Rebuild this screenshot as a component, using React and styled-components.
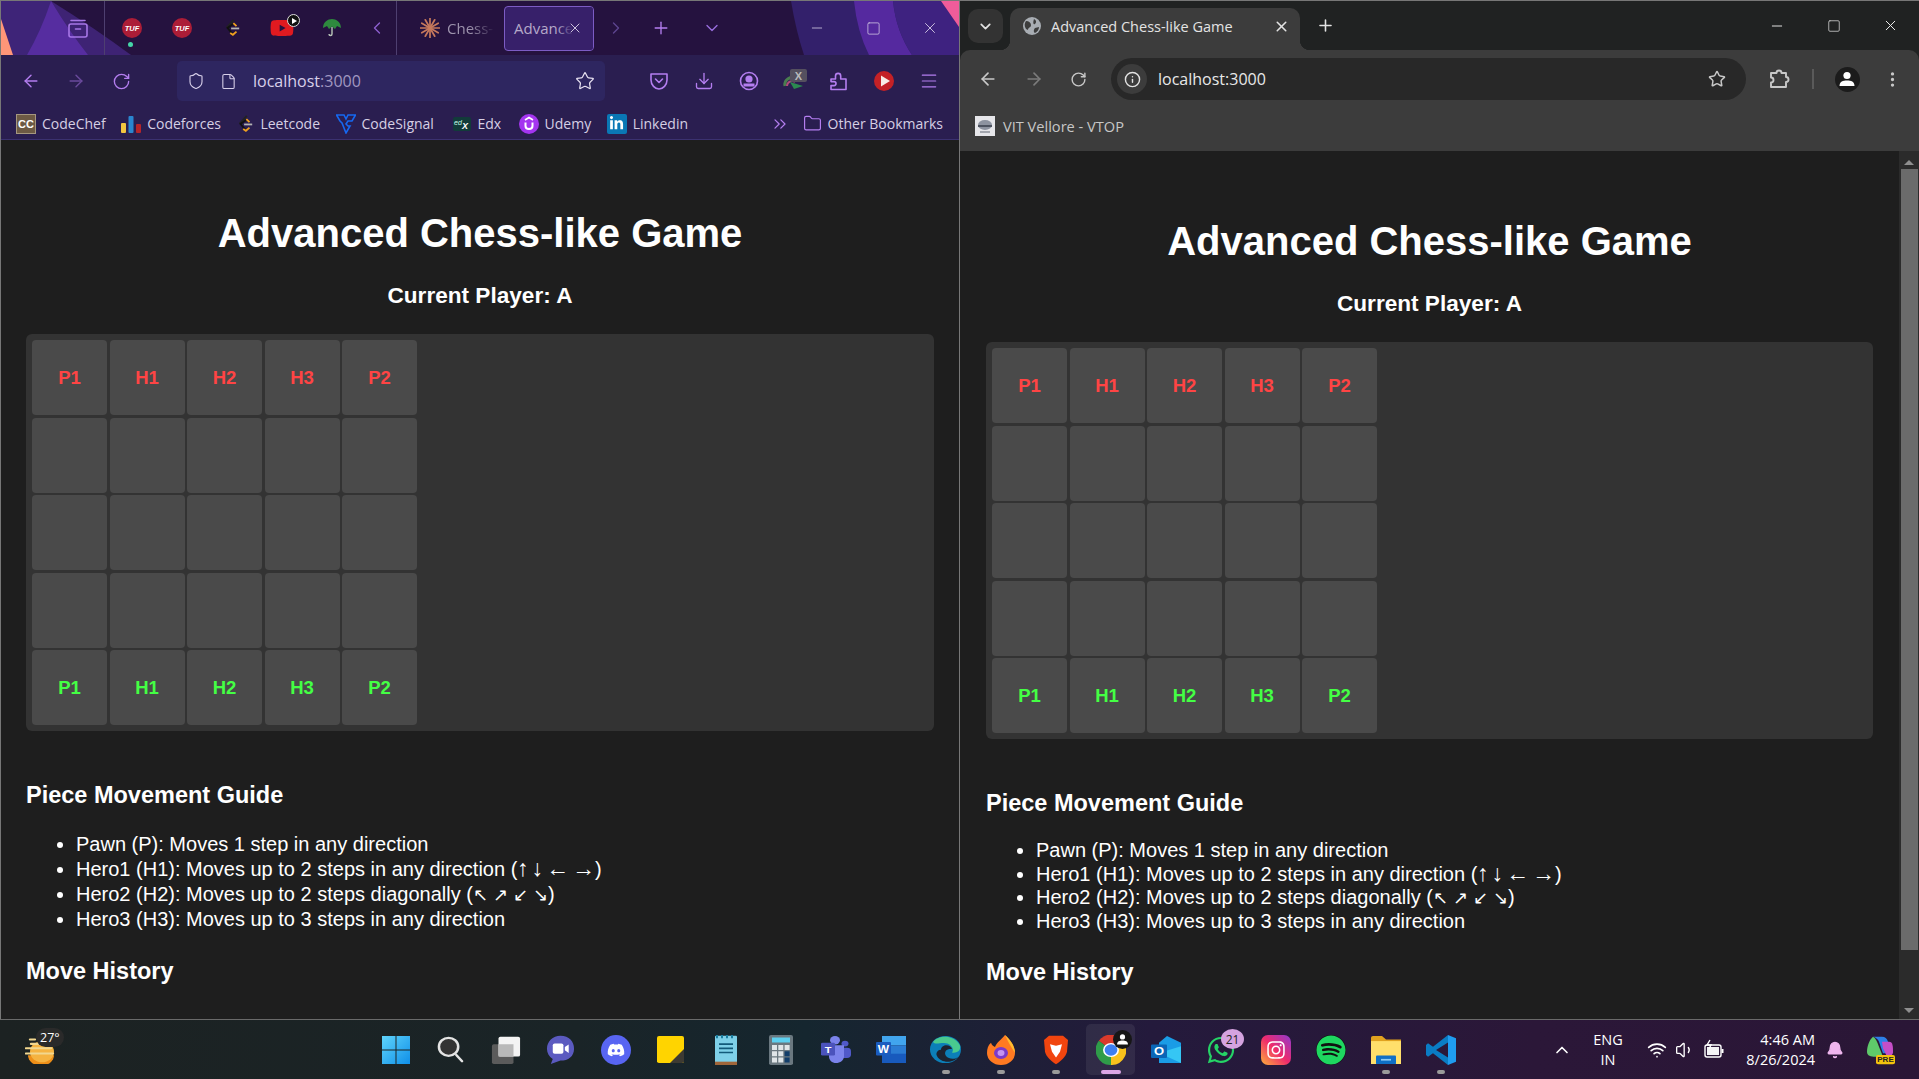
import styled, { createGlobalStyle } from "styled-components";
import {
  ArrowLeft, ArrowRight, RotateCw, Shield, File, Star, Download, Menu, Folder,
  ChevronLeft, ChevronRight, ChevronDown, ChevronUp, ChevronsRight, Plus, X, Minus, Square,
  Info, EllipsisVertical, Wifi, Volume1, Bell,
} from "lucide-react";
import { FaDiscord, FaSpotify, FaWhatsapp, FaInstagram, FaLinkedinIn, FaYoutube } from "react-icons/fa";

const GlobalStyle = createGlobalStyle`
  html, body { margin: 0; padding: 0; height: 100%; overflow: hidden; background: #1e1e1e; }
  * { box-sizing: border-box; }
`;

const Desktop = styled.div`
  width: 1919px;
  height: 1079px;
  display: flex;
  flex-direction: column;
  overflow: hidden;
`;

const Windows = styled.div`
  display: flex;
  height: 1020px;
  border-top: 1px solid #777;
  border-bottom: 1px solid #6a6a6a;
`;

/* ---------- game page ---------- */

const Page = styled.main`
  flex: 1;
  min-width: 0;
  min-height: 0;
  overflow: hidden;
  background: #1e1e1e;
  color: #fff;
  font-family: "Liberation Sans", Arial, sans-serif;
  padding: ${(p) => p.$top}px ${(p) => p.$right}px 0 ${(p) => p.$left}px;
`;

const Title = styled.h1`
  margin: 0;
  font-size: 40px;
  line-height: 46px;
  font-weight: 700;
  text-align: center;
`;

const CurrentPlayer = styled.h2`
  margin: 27px 0 26px;
  font-size: 22.6px;
  line-height: 25px;
  font-weight: 700;
  text-align: center;
`;

const Board = styled.div`
  display: grid;
  grid-template-columns: repeat(5, 75px);
  grid-auto-rows: 75px;
  gap: 2.5px;
  padding: 6px;
  background: #333;
  border-radius: 6px;
`;

const Cell = styled.div`
  display: flex;
  align-items: center;
  justify-content: center;
  background: #4a4a4a;
  border-radius: 4px;
  font-size: 18.5px;
  font-weight: 700;
  color: ${(p) => (p.$side === "A" ? "#44ff44" : "#ff4444")};
`;

const SectionTitle = styled.h3`
  margin: ${(p) => p.$gap}px 0 0;
  font-size: 23.5px;
  line-height: 25px;
  font-weight: 700;
`;

const Guide = styled.ul`
  margin: ${(p) => p.$gap}px 0 0;
  padding-left: 50px;
  font-size: 20px;
  line-height: ${(p) => p.$line}px;
`;

const StraightArrows = styled.span`
  font-size: 23px;
  line-height: 1px;
  word-spacing: -3.5px;
`;

const DiagonalArrows = styled.span`
  font-size: 18px;
  line-height: 1px;
`;

const boardRows = [
  ["P1", "H1", "H2", "H3", "P2"].map((t) => ({ t, side: "B" })),
  ...Array(15).fill({ t: "", side: "" }),
  ["P1", "H1", "H2", "H3", "P2"].map((t) => ({ t, side: "A" })),
].flat();

const GamePage = ({ top, left, right, line, guideGap, historyGap }) => (
  <Page $top={top} $left={left} $right={right}>
    <Title>Advanced Chess-like Game</Title>
    <CurrentPlayer>Current Player: A</CurrentPlayer>
    <Board>
      {boardRows.map((c, i) => (
        <Cell key={i} $side={c.side}>{c.t}</Cell>
      ))}
    </Board>
    <SectionTitle $gap={52}>Piece Movement Guide</SectionTitle>
    <Guide $line={line} $gap={guideGap}>
      <li>Pawn (P): Moves 1 step in any direction</li>
      <li>Hero1 (H1): Moves up to 2 steps in any direction (<StraightArrows>↑ ↓ ← →</StraightArrows>)</li>
      <li>Hero2 (H2): Moves up to 2 steps diagonally (<DiagonalArrows>↖ ↗ ↙ ↘</DiagonalArrows>)</li>
      <li>Hero3 (H3): Moves up to 3 steps in any direction</li>
    </Guide>
    <SectionTitle $gap={historyGap}>Move History</SectionTitle>
  </Page>
);

/* ---------- firefox ---------- */

const FoxWindow = styled.section`
  width: 960px;
  flex: none;
  display: flex;
  flex-direction: column;
  border-left: 1px solid #777;
  border-right: 1px solid #777;
  font-family: "Open Sans", "Noto Sans", sans-serif;
`;

const FoxTabs = styled.div`
  position: relative;
  height: 54px;
  flex: none;
  display: flex;
  align-items: center;
  background: #25123f;
`;

const ThemeArt = styled.svg`
  position: absolute;
  inset: 0;
  width: 100%;
  height: 100%;
`;

const Slot = styled.div`
  position: relative;
  width: ${(p) => p.$w}px;
  height: 100%;
  flex: none;
  display: flex;
  align-items: center;
  justify-content: center;
  color: ${(p) => p.$color || "#b47ef0"};
`;

const StripDivider = styled.div`
  width: 1px;
  height: 100%;
  flex: none;
  position: relative;
  margin: ${(p) => p.$m || "0"};
  background: #4e3f70;
`;

const LoadDot = styled.span`
  position: absolute;
  left: 21px;
  top: 41px;
  width: 5px;
  height: 5px;
  border-radius: 50%;
  background: #45d6a8;
`;

const PlayBadge = styled.span`
  position: absolute;
  right: 7px;
  top: 13px;
  width: 13px;
  height: 13px;
  border-radius: 50%;
  background: #111;
  border: 1px solid #ddd;
  display: flex;
  align-items: center;
  justify-content: center;
  &::after {
    content: "";
    margin-left: 1px;
    border-left: 5px solid #fff;
    border-top: 3px solid transparent;
    border-bottom: 3px solid transparent;
  }
`;

const InactiveTab = styled.div`
  position: relative;
  width: 107px;
  height: 100%;
  flex: none;
  display: flex;
  align-items: center;
  gap: 7px;
  padding-left: 23px;
  font-size: 15px;
  color: #9d93ad;
  white-space: nowrap;
  mask-image: linear-gradient(to right, #000 68%, transparent 92%);
  svg { flex: none; }
`;

const ActiveTab = styled.div`
  position: relative;
  width: 90px;
  height: 45px;
  flex: none;
  display: flex;
  align-items: center;
  padding-left: 9px;
  overflow: hidden;
  background: #37206a;
  border: 1px solid #7c5cc4;
  border-radius: 4px;
  font-size: 15px;
  color: #b5a9c9;
  white-space: nowrap;
`;

const TabClose = styled.span`
  position: absolute;
  right: 0;
  top: 0;
  bottom: 0;
  width: 36px;
  display: flex;
  align-items: center;
  justify-content: center;
  color: #d8cfe6;
  background: linear-gradient(to right, transparent, #37206a 45%);
`;

const FoxToolbar = styled.div`
  height: 52px;
  flex: none;
  display: flex;
  align-items: center;
  padding-left: 7px;
  background: #2a1e50;
`;

const UrlBar = styled.div`
  width: 428px;
  height: 40px;
  flex: none;
  margin: 0 31px 0 32.5px;
  display: flex;
  align-items: center;
  padding: 0 10px 0 10px;
  background: #2e2660;
  border-radius: 5px;
  font-size: 16px;
  color: #d8d0ea;
`;

const UrlText = styled.span`
  margin-left: 16px;
  flex: 1;
`;

const Port = styled.span`
  color: #a198c0;
`;

const Bookmarks = styled.div`
  height: 33px;
  flex: none;
  display: flex;
  align-items: center;
  gap: 15.5px;
  padding: 1px 16px 0 15px;
  background: #2a1e50;
  border-bottom: 1px solid #3b3170;
`;

const Bookmark = styled.div`
  display: flex;
  align-items: center;
  gap: 6px;
  font-size: 14px;
  line-height: 20px;
  color: #d6cfe4;
  white-space: nowrap;
  margin-left: ${(p) => (p.$push ? "auto" : `${p.$shift || 0}px`)};
  margin-right: ${(p) => (p.$push ? "-3px" : "0")};
`;

const CcIcon = styled.span`
  width: 20px;
  height: 20px;
  display: flex;
  align-items: center;
  justify-content: center;
  background: #6d5a44;
  border: 1px solid #a5977f;
  color: #fff;
  font: 700 11px "Liberation Sans", sans-serif;
`;

const LinkedinIcon = styled.span`
  width: 20px;
  height: 20px;
  display: flex;
  align-items: center;
  justify-content: center;
  background: #0a77b5;
  border-radius: 2px;
  color: #fff;
`;

const TufIcon = () => (
  <svg width="20" height="20" viewBox="0 0 20 20">
    <circle cx="10" cy="10" r="10" fill="#ac1d37" />
    <text x="10" y="12.5" textAnchor="middle" fontFamily="Liberation Sans" fontStyle="italic" fontWeight="700" fontSize="7.5" fill="#fff">TUF</text>
  </svg>
);

const LeetIcon = ({ size = 18 }) => (
  <svg width={size} height={size} viewBox="0 0 20 20" fill="none" strokeWidth="2">
    <path d="M12 1 L4 9.5" stroke="#222" />
    <path d="M12 5 L5 10 L11 17" stroke="#111" />
    <path d="M11.5 4.5 L15 8 M15 14 L11 17.5 L8 15.5" stroke="#f0a020" />
    <path d="M9 10.5 H18" stroke="#b3b3b3" />
  </svg>
);

const ArchiveIcon = () => (
  <svg width="22" height="22" viewBox="0 0 22 22" fill="none" stroke="#a777e6" strokeWidth="1.6">
    <rect x="2" y="7" width="18" height="13" rx="2" />
    <path d="M4 3.5 H18 M8.5 12 H13.5" strokeLinecap="round" />
  </svg>
);

const UmbrellaIcon = () => (
  <svg width="20" height="20" viewBox="0 0 20 20">
    <path d="M1 10 C1 4 6 1 10 1 C14 1 19 4 19 10 L15 8 L13 11 L10 8.5 L7 11 L5 8 Z" fill="#2e8a3e" />
    <path d="M10 9 V16 C10 18 7 18 7 16" fill="none" stroke="#b9c7b9" strokeWidth="1.4" />
  </svg>
);

const StarBurst = () => (
  <svg width="20" height="20" viewBox="0 0 20 20" stroke="#c7795c" strokeWidth="1.7" strokeLinecap="round">
    {Array.from({ length: 12 }).map((_, i) => (
      <line key={i} x1="10" y1="10" x2="10" y2="0.5" transform={`rotate(${i * 30} 10 10)`} />
    ))}
  </svg>
);

const PocketIcon = () => (
  <svg width="20" height="20" viewBox="0 0 20 20" fill="none" stroke="#b47ef0" strokeWidth="1.6" strokeLinecap="round" strokeLinejoin="round">
    <path d="M2 3 H18 V9 C18 14 14 18 10 18 C6 18 2 14 2 9 Z" />
    <path d="M6.5 8 L10 11.5 L13.5 8" />
  </svg>
);

const AccountIcon = () => (
  <svg width="20" height="20" viewBox="0 0 20 20" fill="none" stroke="#b47ef0" strokeWidth="1.6">
    <circle cx="10" cy="10" r="8.5" />
    <circle cx="10" cy="8" r="2.8" fill="#b47ef0" />
    <path d="M4.5 14 H15.5" strokeWidth="3" />
  </svg>
);

const ExtensionIcon = () => (
  <svg width="26" height="26" viewBox="0 0 26 26">
    <path d="M4 18 A7 7 0 0 1 15 11" fill="none" stroke="#4a7d4f" strokeWidth="3" />
    <path d="M6 18 A5 5 0 0 1 14 14" fill="none" stroke="#b24a7a" strokeWidth="2" />
    <path d="M9 14 L22 18 L13 21 Z" fill="#2c8a50" />
    <rect x="9" y="1" width="17" height="13" rx="2" fill="#55505f" />
    <text x="17.5" y="11.5" textAnchor="middle" fontFamily="Liberation Sans" fontWeight="700" fontSize="11" fill="#bbb">X</text>
  </svg>
);

const FoxPuzzle = () => (
  <svg width="20" height="20" viewBox="0 0 20 20" fill="none" stroke="#b47ef0" strokeWidth="1.6" strokeLinejoin="round">
    <path d="M2 8 H6.5 V5 A2.6 2.6 0 0 1 11.7 5 V8 H17 V18.5 H2 V14.6 H5 A2 2 0 0 0 5 10.6 H2 Z" />
  </svg>
);

const RedPlay = () => (
  <svg width="20" height="20" viewBox="0 0 20 20">
    <circle cx="10" cy="10" r="10" fill="#c42126" />
    <path d="M7 4.5 L16 10 L7 15.5 Z" fill="#f7ece6" />
  </svg>
);

const BarsIcon = () => (
  <svg width="20" height="20" viewBox="0 0 20 20">
    <rect x="0" y="9" width="5" height="10" rx="1" fill="#f3c63f" />
    <rect x="7.5" y="2" width="5" height="17" rx="1" fill="#2a86cf" />
    <rect x="15" y="10" width="5" height="9" rx="1" fill="#b5252a" />
  </svg>
);

const SignalIcon = () => (
  <svg width="20" height="20" viewBox="0 0 20 20" fill="none" stroke="#1668f0" strokeWidth="1.6">
    <path d="M0.5 1 H8 L10 5 L12 1 H19.5 L16 7 H12 L10 10 L12 12 H14 L10 19 L6 9 L4 7 Z" />
  </svg>
);

const EdxIcon = () => (
  <svg width="18" height="14" viewBox="0 0 18 14">
    <rect width="18" height="14" rx="2" fill="#123b3a" />
    <text x="1" y="8" fontFamily="Liberation Sans" fontStyle="italic" fontSize="7" fill="#cfe">ed</text>
    <text x="9" y="12" fontFamily="Liberation Sans" fontStyle="italic" fontWeight="700" fontSize="9" fill="#fff">X</text>
  </svg>
);

const UdemyIcon = () => (
  <svg width="20" height="20" viewBox="0 0 20 20">
    <circle cx="10" cy="10" r="10" fill="#a435f0" />
    <path d="M6.5 8.5 V12 C6.5 16 13.5 16 13.5 12 V8.5" fill="none" stroke="#fff" strokeWidth="2" />
    <path d="M6 6 L10 3.5 L14 6" fill="none" stroke="#fff" strokeWidth="1.6" />
  </svg>
);

const FirefoxWindow = () => (
  <FoxWindow>
    <FoxTabs>
      <ThemeArt viewBox="0 0 958 54" preserveAspectRatio="none">
        <path d="M0 0 H50 Q95 28 130 54 H0 Z" fill="#3e2374" />
        <path d="M50 0 Q68 30 87 54 H10 L0 20 V0 Z" fill="#5a2fa8" opacity="0.85" />
        <path d="M0 0 H50 Q40 30 26 54 H8 L0 20 Z" fill="#3e2478" />
        <path d="M0 18 L12 54 H0 Z" fill="#ff9678" />
        <path d="M790 0 H958 V54 H803 Q795 30 790 0 Z" fill="#33206b" />
        <path d="M853 0 H892 Q895 30 911 54 H868 Q856 30 853 0 Z" fill="#55299f" />
        <path d="M892 0 H940 L958 26 V54 H911 Q895 30 892 0 Z" fill="#3e2280" />
        <path d="M940 0 H958 V26 Z" fill="#ef5c9a" />
      </ThemeArt>
      <Slot $w={50} />
      <Slot $w={53}><ArchiveIcon /></Slot>
      <StripDivider $m="0 2px 0 0" />
      <Slot $w={50}><TufIcon /><LoadDot /></Slot>
      <Slot $w={50}><TufIcon /></Slot>
      <Slot $w={50}><LeetIcon /></Slot>
      <Slot $w={50} $color="#e01a20"><FaYoutube size={24} /><PlayBadge /></Slot>
      <Slot $w={50}><UmbrellaIcon /></Slot>
      <Slot $w={39} $color="#8d5fd0"><ChevronLeft size={20} strokeWidth={1.6} /></Slot>
      <StripDivider />
      <InactiveTab><StarBurst />Chess-</InactiveTab>
      <ActiveTab>
        Advanced
        <TabClose><X size={16} strokeWidth={1.4} /></TabClose>
      </ActiveTab>
      <Slot $w={44} $color="#5d4590"><ChevronRight size={20} strokeWidth={1.6} /></Slot>
      <Slot $w={46}><Plus size={20} strokeWidth={1.6} /></Slot>
      <Slot $w={56} $color="#9a6fe0"><ChevronDown size={20} strokeWidth={1.6} /></Slot>
      <Slot $w={48} />
      <Slot $w={57} $color="#d6cde6"><Minus size={16} strokeWidth={1.2} /></Slot>
      <Slot $w={57} $color="#d6cde6"><Square size={15} strokeWidth={1.2} /></Slot>
      <Slot $w={56} $color="#d6cde6"><X size={18} strokeWidth={1.2} /></Slot>
    </FoxTabs>
    <FoxToolbar>
      <Slot $w={45.5}><ArrowLeft size={20} strokeWidth={1.7} /></Slot>
      <Slot $w={45.5} $color="#6a4a9c"><ArrowRight size={20} strokeWidth={1.7} /></Slot>
      <Slot $w={45.5}><RotateCw size={19} strokeWidth={1.7} /></Slot>
      <UrlBar>
        <Shield size={18} strokeWidth={1.5} color="#d8d0ea" />
        <File size={17} strokeWidth={1.5} color="#d8d0ea" style={{ marginLeft: 15 }} />
        <UrlText>localhost<Port>:3000</Port></UrlText>
        <Star size={20} strokeWidth={1.5} color="#e6e0f0" />
      </UrlBar>
      <Slot $w={45}><PocketIcon /></Slot>
      <Slot $w={45}><Download size={20} strokeWidth={1.6} /></Slot>
      <Slot $w={45}><AccountIcon /></Slot>
      <Slot $w={45}><ExtensionIcon /></Slot>
      <Slot $w={45}><FoxPuzzle /></Slot>
      <Slot $w={45}><RedPlay /></Slot>
      <Slot $w={45}><Menu size={20} strokeWidth={1.4} /></Slot>
    </FoxToolbar>
    <Bookmarks>
      <Bookmark><CcIcon>CC</CcIcon>CodeChef</Bookmark>
      <Bookmark><BarsIcon />Codeforces</Bookmark>
      <Bookmark><LeetIcon />Leetcode</Bookmark>
      <Bookmark><SignalIcon />CodeSignal</Bookmark>
      <Bookmark $shift={4}><EdxIcon />Edx</Bookmark>
      <Bookmark $shift={2}><UdemyIcon />Udemy</Bookmark>
      <Bookmark><LinkedinIcon><FaLinkedinIn size={15} /></LinkedinIcon>Linkedin</Bookmark>
      <Bookmark $push><ChevronsRight size={20} strokeWidth={1.5} color="#b47ef0" /></Bookmark>
      <Bookmark><Folder size={19} strokeWidth={1.5} color="#b47ef0" />Other Bookmarks</Bookmark>
    </Bookmarks>
    <GamePage top={70} left={25} right={25} line={25.3} guideGap={23.5} historyGap={26} />
  </FoxWindow>
);

/* ---------- chrome ---------- */

const ChromeFrame = styled.section`
  flex: 1;
  min-width: 0;
  display: flex;
  flex-direction: column;
  font-family: "Open Sans", "Noto Sans", sans-serif;
  background: #202222;
`;

const ChromeTabs = styled.div`
  height: 49px;
  flex: none;
  display: flex;
  align-items: flex-end;
`;

const TabSearch = styled.div`
  width: 35px;
  height: 34px;
  flex: none;
  margin: 0 7px 7px 8px;
  display: flex;
  align-items: center;
  justify-content: center;
  border-radius: 10px;
  background: #333;
  color: #e3e3e3;
`;

const ChromeTab = styled.div`
  position: relative;
  width: 290px;
  height: 42px;
  flex: none;
  display: flex;
  align-items: center;
  gap: 10px;
  padding: 0 10px 6px 13px;
  border-radius: 10px 10px 0 0;
  background: #3c3c3c;
  font-size: 14.5px;
  color: #e3e3e3;
  &::before, &::after {
    content: "";
    position: absolute;
    bottom: 0;
    width: 10px;
    height: 10px;
  }
  &::before { left: -10px; background: radial-gradient(circle at 0 0, transparent 10px, #3c3c3c 10.5px); }
  &::after { right: -10px; background: radial-gradient(circle at 100% 0, transparent 10px, #3c3c3c 10.5px); }
`;

const TabLabel = styled.span`
  flex: 1;
`;

const NewTab = styled.div`
  margin: 0 0 8px 14px;
  width: 22px;
  height: 34px;
  display: flex;
  align-items: center;
  justify-content: center;
  color: #e3e3e3;
`;

const WinControls = styled.div`
  margin: 0 0 0 auto;
  align-self: stretch;
  display: flex;
`;

const ChromeToolbar = styled.div`
  height: 50px;
  flex: none;
  display: flex;
  align-items: center;
  padding: 8px 0 0 5px;
  background: #3c3c3c;
  border-radius: 10px 10px 0 0;
`;

const Omnibox = styled.div`
  width: 635px;
  height: 42px;
  flex: none;
  margin-left: 11px;
  display: flex;
  align-items: center;
  padding: 0 20px 0 6px;
  border-radius: 21px;
  background: #282828;
  font-size: 16px;
  color: #e8e8e8;
`;

const InfoChip = styled.span`
  width: 30px;
  height: 30px;
  flex: none;
  margin-right: 11px;
  display: flex;
  align-items: center;
  justify-content: center;
  border-radius: 50%;
  background: #3c3c3c;
  color: #e3e3e3;
`;

const OmniText = styled.span`
  flex: 1;
`;

const ToolDivider = styled.div`
  width: 2px;
  height: 20px;
  flex: none;
  background: #5a5a5a;
`;

const Avatar = styled.div`
  width: 25px;
  height: 25px;
  border-radius: 50%;
  background: #1b1b1b;
  display: flex;
  align-items: center;
  justify-content: center;
`;

const ChromeBookmarks = styled.div`
  height: 51px;
  flex: none;
  display: flex;
  align-items: center;
  gap: 8px;
  padding-left: 15px;
  background: #3c3c3c;
  font-size: 14.6px;
  color: #c7c7c7;
`;

const VitIcon = () => (
  <svg width="20" height="20" viewBox="0 0 20 20">
    <rect width="20" height="20" fill="#e6e6ea" />
    <ellipse cx="10" cy="9" rx="7" ry="5" fill="#8d93a0" />
    <rect x="3" y="9" width="14" height="2" fill="#4d5360" />
    <rect x="5" y="15" width="10" height="2" fill="#a3a6ae" />
  </svg>
);

const GlobeFavicon = () => (
  <svg width="18" height="18" viewBox="0 0 18 18">
    <circle cx="9" cy="9" r="9" fill="#a8adb3" />
    <path d="M3 4 C6 4 8 6 8 8 C8 11 5 10 5 13 L3 12 C1 9 1.5 6 3 4 Z M11 2 C13 3 14 5 12 7 C10 8 10 5 11 2 Z M12 11 L16 10 C16 13 14 15 12 16 C10 15 11 12 12 11 Z" fill="#3c3c3c" />
  </svg>
);

const ChromePuzzle = () => (
  <svg width="22" height="22" viewBox="0 0 22 22" fill="none" stroke="#c8c8c8" strokeWidth="1.9" strokeLinejoin="round">
    <path d="M3 5 H8.5 A2.5 2.5 0 0 1 13.5 5 H18 V9 A2.5 2.5 0 0 1 18 14 V19 H3 V14.5 A2.5 2.5 0 0 0 3 9.5 Z" />
  </svg>
);

const UserGlyph = () => (
  <svg width="18" height="18" viewBox="0 0 18 18" fill="#fff">
    <circle cx="9" cy="5.5" r="3.6" />
    <path d="M1.5 16 C1.5 11.5 5 10.5 9 10.5 C13 10.5 16.5 11.5 16.5 16 Z" />
  </svg>
);

const Scrollbar = styled.div`
  width: 20px;
  flex: none;
  display: flex;
  flex-direction: column;
  align-items: center;
  background: #2b2b2b;
`;

const ScrollThumb = styled.div`
  width: 17px;
  height: 781px;
  margin: 4px 0 auto;
  background: #6b6b6b;
`;

const Arrow = styled.div`
  width: 0;
  height: 0;
  margin: 9px 0 0;
  border-left: 5px solid transparent;
  border-right: 5px solid transparent;
  border-bottom: ${(p) => (p.$down ? "0" : "5px solid #8f8f8f")};
  border-top: ${(p) => (p.$down ? "5px solid #8f8f8f" : "0")};
  margin-bottom: ${(p) => (p.$down ? "6px" : "0")};
`;

const ChromePageWrap = styled.div`
  flex: 1;
  min-height: 0;
  display: flex;
`;

const ChromeWindow = () => (
  <ChromeFrame>
    <ChromeTabs>
      <TabSearch><ChevronDown size={17} strokeWidth={2.4} /></TabSearch>
      <ChromeTab>
        <GlobeFavicon />
        <TabLabel>Advanced Chess-like Game</TabLabel>
        <X size={17} strokeWidth={2.2} />
      </ChromeTab>
      <NewTab><Plus size={19} strokeWidth={2} /></NewTab>
      <WinControls>
        <Slot $w={56} $color="#eee"><Minus size={16} strokeWidth={1.4} /></Slot>
        <Slot $w={57} $color="#ccc"><Square size={14} strokeWidth={1.4} /></Slot>
        <Slot $w={57} $color="#eee"><X size={17} strokeWidth={1.4} /></Slot>
      </WinControls>
    </ChromeTabs>
    <ChromeToolbar>
      <Slot $w={46} $color="#c8c8c8"><ArrowLeft size={20} strokeWidth={2} /></Slot>
      <Slot $w={45} $color="#7b7b7b"><ArrowRight size={20} strokeWidth={2} /></Slot>
      <Slot $w={44} $color="#c8c8c8"><RotateCw size={17} strokeWidth={2} /></Slot>
      <Omnibox>
        <InfoChip><Info size={17} strokeWidth={2} /></InfoChip>
        <OmniText>localhost:3000</OmniText>
        <Star size={18} strokeWidth={2} color="#c8c8c8" />
      </Omnibox>
      <Slot $w={66}><ChromePuzzle /></Slot>
      <ToolDivider />
      <Slot $w={66}><Avatar><UserGlyph /></Avatar></Slot>
      <Slot $w={24} $color="#c8c8c8"><EllipsisVertical size={19} strokeWidth={2.2} /></Slot>
    </ChromeToolbar>
    <ChromeBookmarks><VitIcon />VIT Vellore - VTOP</ChromeBookmarks>
    <ChromePageWrap>
      <GamePage top={67} left={26} right={26} line={23.5} guideGap={23} historyGap={27} />
      <Scrollbar>
        <Arrow />
        <ScrollThumb />
        <Arrow $down />
      </Scrollbar>
    </ChromePageWrap>
  </ChromeFrame>
);

/* ---------- taskbar ---------- */

const Taskbar = styled.footer`
  flex: 1;
  display: flex;
  align-items: center;
  background: linear-gradient(90deg, #1c2222 0%, #1a2427 30%, #15262f 42%, #241a3c 60%, #2b1738 80%, #2a1636 100%);
  font-family: "Open Sans", "Noto Sans", sans-serif;
  color: #fff;
`;

const Weather = styled.div`
  position: relative;
  width: 368px;
  height: 100%;
  flex: none;
  display: flex;
  align-items: center;
  padding-left: 25px;
`;

const Temp = styled.span`
  position: absolute;
  left: 36px;
  top: 8px;
  padding: 1px 4px;
  border-radius: 10px;
  background: #2a2a2a;
  font-size: 12.5px;
`;

const TaskIcons = styled.div`
  display: flex;
  height: 100%;
`;

const TaskItem = styled.div`
  position: relative;
  width: 55px;
  height: 100%;
  flex: none;
  display: flex;
  align-items: center;
  justify-content: center;
  border-radius: 5px;
  ${(p) => p.$active && "background: rgba(255,255,255,0.07);"}
  margin: ${(p) => (p.$active ? "4px 3px" : "0")};
  ${(p) => p.$active && "width: 49px; height: 51px;"}
  &::after {
    content: "";
    display: ${(p) => (p.$state ? "block" : "none")};
    position: absolute;
    left: 50%;
    bottom: ${(p) => (p.$active ? "1px" : "5px")};
    width: ${(p) => (p.$active ? "20px" : "8px")};
    height: 4px;
    margin-left: ${(p) => (p.$active ? "-10px" : "-4px")};
    border-radius: 2px;
    background: ${(p) => (p.$active ? "#dba6e6" : "#9a9a9a")};
  }
`;

const CountBadge = styled.span`
  position: absolute;
  right: 4px;
  top: 9px;
  width: 23px;
  height: 20px;
  display: flex;
  align-items: center;
  justify-content: center;
  border-radius: 50%;
  background: #d5a3e0;
  color: #222;
  font-size: 12px;
`;

const ProfileBadge = styled.span`
  position: absolute;
  right: 3px;
  top: 6px;
  width: 19px;
  height: 19px;
  display: flex;
  align-items: center;
  justify-content: center;
  border-radius: 50%;
  background: #161616;
  svg { width: 13px; height: 13px; }
`;

const Tray = styled.div`
  margin-left: 84px;
  height: 100%;
  display: flex;
  align-items: center;
  flex: 1;
  min-width: 0;
`;

const Lang = styled.div`
  width: 46px;
  margin-left: 13px;
  text-align: center;
  font-size: 14.5px;
  line-height: 20px;
`;

const TrayIcons = styled.div`
  display: flex;
  align-items: center;
  gap: 8px;
  margin-left: 16px;
`;

const Clock = styled.div`
  width: 90px;
  text-align: right;
  font-size: 14.5px;
  line-height: 20px;
`;

const WinLogo = () => (
  <svg width="30" height="30" viewBox="0 0 30 30">
    <defs>
      <linearGradient id="win" x1="0" y1="0" x2="1" y2="1">
        <stop offset="0" stopColor="#5fd4fb" />
        <stop offset="1" stopColor="#0f8fe8" />
      </linearGradient>
    </defs>
    <path d="M1 1 H14.5 V14.5 H1 Z M15.5 1 H29 V14.5 H15.5 Z M1 15.5 H14.5 V29 H1 Z M15.5 15.5 H29 V29 H15.5 Z" fill="url(#win)" />
  </svg>
);

const SearchGlyph = () => (
  <svg width="27" height="27" viewBox="0 0 28 30" preserveAspectRatio="none" fill="none" stroke="#e4e4e4" strokeWidth="2.6">
    <circle cx="12" cy="12" r="10" fill="#333" />
    <path d="M20 21 L26 28" strokeLinecap="round" />
  </svg>
);

const TaskView = () => (
  <svg width="30" height="28" viewBox="0 0 32 34" preserveAspectRatio="none">
    <rect x="1" y="10" width="23" height="24" rx="2" fill="#5b5b5b" />
    <rect x="8" y="1" width="23" height="24" rx="2" fill="#f4f4f4" />
    <rect x="8" y="10" width="16" height="15" fill="#b9b9b9" />
  </svg>
);

const MeetIcon = () => (
  <svg width="29" height="29" viewBox="0 0 30 34" preserveAspectRatio="none">
    <path d="M15 1 C24 1 29 8 29 16 C29 25 23 30 15 30 L5 34 L7 28 C3 25 1 21 1 16 C1 8 7 1 15 1 Z" fill="#5b5ac0" />
    <rect x="7" y="10" width="11" height="12" rx="2" fill="#fff" />
    <path d="M19.5 14 L23.5 11 V21 L19.5 18 Z" fill="#fff" />
  </svg>
);

const DiscordIcon = () => (
  <svg width="30" height="30" viewBox="0 0 30 30">
    <circle cx="15" cy="15" r="15" fill="#5865f2" />
    <foreignObject x="6" y="6" width="18" height="18"><FaDiscord size={18} color="#fff" /></foreignObject>
  </svg>
);

const StickyIcon = () => (
  <svg width="27" height="27" viewBox="0 0 27 33" preserveAspectRatio="none">
    <rect width="27" height="33" rx="2" fill="#ffd400" />
    <path d="M27 16 V31 A2 2 0 0 1 25 33 H13 Z" fill="#3d3a32" />
  </svg>
);

const NotepadIcon = () => (
  <svg width="22" height="30" viewBox="0 0 22 36" preserveAspectRatio="none">
    <rect y="1" width="22" height="33" rx="1" fill="#7ed0e8" />
    <rect y="32" width="22" height="4" fill="#a0663a" />
    <path d="M4 11 H18 M4 16 H18 M4 21 H18" stroke="#125a7a" strokeWidth="2" />
    <path d="M2 0 V4 M7 0 V4 M12 0 V4 M17 0 V4" stroke="#1a7ea0" strokeWidth="2" />
  </svg>
);

const CalcIcon = () => (
  <svg width="24" height="30" viewBox="0 0 24 36" preserveAspectRatio="none">
    <rect width="24" height="36" rx="2" fill="#6a7880" />
    <rect x="3" y="3" width="18" height="6" fill="#5cd0f0" />
    {[0, 1, 2].map((r) => [0, 1, 2].map((c) => (
      <rect key={`${r}${c}`} x={3 + c * 6.3} y={12 + r * 7.5} width="5" height="6" fill={c === 2 && r > 0 ? "#123e6a" : "#dfe5e8"} />
    )))}
  </svg>
);

const TeamsIcon = () => (
  <svg width="30" height="27" viewBox="0 0 30 32" preserveAspectRatio="none">
    <circle cx="24" cy="9" r="3.5" fill="#5059c9" />
    <rect x="19" y="14" width="11" height="12" rx="4" fill="#5059c9" />
    <circle cx="14" cy="5" r="5" fill="#7b83eb" />
    <path d="M8 11 H23 V24 C23 29 19 32 15 32 C11 32 8 29 8 24 Z" fill="#7b83eb" />
    <rect y="8" width="14" height="15" rx="1.5" fill="#4b53bc" />
    <text x="7" y="20" textAnchor="middle" fontFamily="Liberation Sans" fontWeight="700" fontSize="11" fill="#fff">T</text>
  </svg>
);

const WordIcon = () => (
  <svg width="30" height="27" viewBox="0 0 30 32" preserveAspectRatio="none">
    <rect x="6" width="24" height="11" fill="#41a5ee" />
    <rect x="6" y="11" width="24" height="11" fill="#2b7cd3" />
    <rect x="6" y="21" width="24" height="11" fill="#185abd" />
    <rect y="7" width="15" height="16" rx="1" fill="#1a5cbf" />
    <text x="7.5" y="20" textAnchor="middle" fontFamily="Liberation Sans" fontWeight="700" fontSize="12" fill="#fff">W</text>
  </svg>
);

const EdgeIcon = () => (
  <svg width="31" height="29" viewBox="0 0 31 33" preserveAspectRatio="none">
    <circle cx="15.5" cy="16.5" r="15.5" fill="#0c7fb8" />
    <path d="M3 8 C8 0 24 -1 30 12 C31 18 27 21 22 20 C25 15 20 9 14 9 C9 9 5 11 3 8 Z" fill="#49c98f" />
    <path d="M11 17 C11 10 21 10 22 16 C18 15 13 18 16 24 C19 28 25 28 28 25 C24 32 11 33 7 24 C5 20 9 16 11 17 Z" fill="#1d2330" />
  </svg>
);

const FoxIcon = () => (
  <svg width="28" height="30" viewBox="0 0 28 35" preserveAspectRatio="none">
    <path d="M18 0 C22 4 28 12 28 21 A14 14 0 0 1 0 21 C0 16 1 12 4 9 C5 12 6 13 8 14 C10 8 14 6 18 0 Z" fill="#ff7a22" />
    <path d="M18 0 C22 4 28 12 28 21 C24 14 21 8 18 0 Z" fill="#ffbd2e" />
    <circle cx="14" cy="21" r="7" fill="#7b3ac8" />
    <circle cx="14" cy="21" r="3.5" fill="#c594f0" />
  </svg>
);

const BraveIcon = () => (
  <svg width="26" height="30" viewBox="0 0 26 36" preserveAspectRatio="none">
    <path d="M6 1 H20 L25 6 L24 20 C23 26 17 32 13 35 C9 32 3 26 2 20 L1 6 Z" fill="#f1450f" />
    <path d="M7 11 L13 13 L19 11 L17 20 L13 27 L9 20 Z" fill="#fff" />
  </svg>
);

const ChromeIcon = () => (
  <svg width="30" height="30" viewBox="0 0 32 36" preserveAspectRatio="none">
    <path d="M16 18 L3 7 A16 18 0 0 1 29 7 Z" fill="#d93a2b" />
    <path d="M16 18 L29 7 A16 18 0 0 1 16 36 Z" fill="#f9c21c" />
    <path d="M16 18 L16 36 A16 18 0 0 1 3 7 Z" fill="#2f9c49" />
    <circle cx="16" cy="18" r="8.5" fill="#fff" />
    <circle cx="16" cy="18" r="6.8" fill="#3d7ff0" />
  </svg>
);

const OutlookIcon = () => (
  <svg width="30" height="27" viewBox="0 0 30 32" preserveAspectRatio="none">
    <path d="M16 0 L30 8 V32 H8 V8 Z" fill="#1a9ce6" />
    <path d="M8 20 L30 32 V12 Z" fill="#35c6f4" />
    <rect y="10" width="16" height="16" rx="1" fill="#0a66b7" />
    <text x="8" y="23" textAnchor="middle" fontFamily="Liberation Sans" fontWeight="700" fontSize="13" fill="#fff">O</text>
  </svg>
);

const InstaIcon = () => (
  <svg width="30" height="30" viewBox="0 0 30 30">
    <defs>
      <linearGradient id="ig" x1="0" y1="1" x2="1" y2="0">
        <stop offset="0" stopColor="#fdb03a" />
        <stop offset="0.5" stopColor="#ee2a6c" />
        <stop offset="1" stopColor="#8f3ad0" />
      </linearGradient>
    </defs>
    <rect width="30" height="30" rx="7" fill="url(#ig)" />
    <foreignObject x="5" y="5" width="20" height="20"><FaInstagram size={20} color="#fff" /></foreignObject>
  </svg>
);

const SpotifyIcon = () => <FaSpotify size={30} color="#1ed760" style={{ background: "#111", borderRadius: "50%" }} />;

const FilesIcon = () => (
  <svg width="30" height="28" viewBox="0 0 30 33" preserveAspectRatio="none">
    <path d="M0 2 A2 2 0 0 1 2 0 H11 L15 4 H30 V33 H0 Z" fill="#e0a21f" />
    <rect y="6" width="30" height="27" fill="#ffdf6b" />
    <rect x="5" y="23" width="20" height="10" rx="1" fill="#0f6fc6" />
    <rect x="10" y="27" width="10" height="2" fill="#8ccbf5" />
  </svg>
);

const VsCodeIcon = () => (
  <svg width="30" height="30" viewBox="0 0 30 36" preserveAspectRatio="none">
    <path d="M22 0 L30 4 V32 L22 36 Z" fill="#1f9cf0" />
    <path d="M22 0 V9 L10 18 L22 27 V36 L7 22 L2 26 L0 24 V12 L2 10 L7 14 Z" fill="#0a7cc4" />
  </svg>
);

const BatteryGlyph = () => (
  <svg width="22" height="22" viewBox="0 0 22 22" fill="none" stroke="#fff" strokeWidth="1.4">
    <rect x="2" y="6" width="16" height="12" rx="2" />
    <rect x="4" y="8" width="12" height="8" fill="#fff" stroke="none" opacity="0.95" />
    <path d="M19.5 10 V14" strokeWidth="2" />
    <path d="M7 1 L4 6 H8 L6 10" strokeWidth="1.4" />
  </svg>
);

const CopilotIcon = () => (
  <svg width="30" height="30" viewBox="0 0 30 36" preserveAspectRatio="none">
    <path d="M8 2 H17 C20 2 22 4 23 8 L28 22 H18 L14 8 C13 5 11 3 8 2 Z" fill="#2d7fe8" />
    <path d="M17 8 H24 C28 8 28 14 28 20 C28 25 24 26 22 26 L18 16 Z" fill="#c54ec8" />
    <path d="M8 2 C4 6 2 14 2 20 C2 25 6 26 10 26 H18 L14 14 C12 8 11 4 8 2 Z" fill="#5fc96a" />
    <rect x="11" y="24" width="19" height="11" rx="2" fill="#f4c20d" />
    <text x="20.5" y="32.5" textAnchor="middle" fontFamily="Liberation Sans" fontWeight="700" fontSize="8" fill="#222">PRE</text>
  </svg>
);

const WeatherIcon = () => (
  <svg width="30" height="28" viewBox="0 0 30 32" preserveAspectRatio="none">
    <path d="M3 22 H29 A13 12 0 0 1 3 22 Z" fill="#ee8f18" />
    <circle cx="17" cy="18" r="12" fill="#f5b341" />
    <path d="M5 4 H10 M6 9 H18 M1 14 H26 M1 20 H28" stroke="#f2d78f" strokeWidth="2.4" strokeLinecap="round" />
  </svg>
);

const apps = [
  { key: "win", icon: <WinLogo /> },
  { key: "search", icon: <SearchGlyph /> },
  { key: "view", icon: <TaskView /> },
  { key: "meet", icon: <MeetIcon /> },
  { key: "discord", icon: <DiscordIcon /> },
  { key: "sticky", icon: <StickyIcon /> },
  { key: "notepad", icon: <NotepadIcon /> },
  { key: "calc", icon: <CalcIcon /> },
  { key: "teams", icon: <TeamsIcon /> },
  { key: "word", icon: <WordIcon /> },
  { key: "edge", icon: <EdgeIcon />, open: true },
  { key: "fox", icon: <FoxIcon />, open: true },
  { key: "brave", icon: <BraveIcon />, open: true },
  { key: "chrome", icon: <ChromeIcon />, open: true, active: true, extra: <ProfileBadge><UserGlyph /></ProfileBadge> },
  { key: "outlook", icon: <OutlookIcon /> },
  { key: "whatsapp", icon: <FaWhatsapp size={30} color="#25d366" />, extra: <CountBadge>21</CountBadge> },
  { key: "insta", icon: <InstaIcon /> },
  { key: "spotify", icon: <SpotifyIcon /> },
  { key: "files", icon: <FilesIcon />, open: true },
  { key: "vscode", icon: <VsCodeIcon />, open: true },
];

const App = () => (
  <Desktop>
    <GlobalStyle />
    <Windows>
      <FirefoxWindow />
      <ChromeWindow />
    </Windows>
    <Taskbar>
      <Weather>
        <WeatherIcon />
        <Temp>27°</Temp>
      </Weather>
      <TaskIcons>
        {apps.map((a) => (
          <TaskItem key={a.key} $state={a.open} $active={a.active}>
            {a.icon}
            {a.extra}
          </TaskItem>
        ))}
      </TaskIcons>
      <Tray>
        <ChevronUp size={20} strokeWidth={2} />
        <Lang>ENG<br />IN</Lang>
        <TrayIcons>
          <Wifi size={20} strokeWidth={2} />
          <Volume1 size={20} strokeWidth={1.6} />
          <BatteryGlyph />
        </TrayIcons>
        <Clock>4:46 AM<br />8/26/2024</Clock>
        <Bell size={18} fill="#efb6ee" color="#efb6ee" style={{ marginLeft: 11 }} />
        <span style={{ marginLeft: 21, display: "flex" }}><CopilotIcon /></span>
      </Tray>
    </Taskbar>
  </Desktop>
);

export default App;
